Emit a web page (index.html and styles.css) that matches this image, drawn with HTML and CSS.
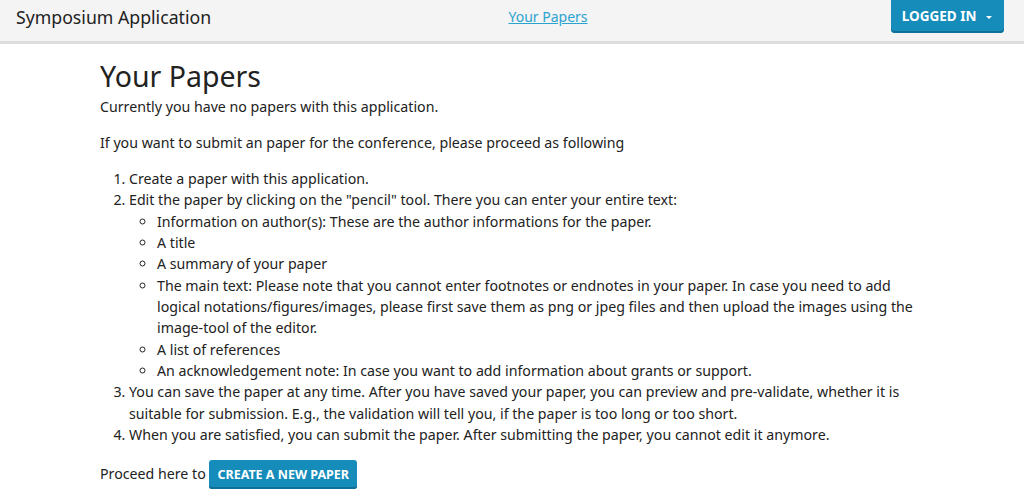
FILE: index.html
```html
<!DOCTYPE html>
<html lang="en">
<head>
  <meta charset="UTF-8" />
  <meta name="viewport" content="width=device-width, initial-scale=1.0"/>
  <title>Your Papers</title>
  <link rel="stylesheet" href="styles.css">
</head>
<body>

  <!-- top bar -->
  <nav class="top-bar">
    <div class="brand">Symposium Application</div>
    <div class="top-links">
      <a href="#">Your Papers</a>
    </div>
    <div class="top-right">
      <a href="#" class="button dropdown">LOGGED IN <span class="caret"></span></a>
    </div>
  </nav>

  <!-- content -->
  <main class="row">
    <h1>Your Papers</h1>
    <p>Currently you have no papers with this application.</p>
    <p>If you want to submit an paper for the conference, please proceed as following</p>
    <ol class="steps">
      <li>Create a paper with this application.</li>
      <li>Edit the paper by clicking on the "pencil" tool. There you can enter your entire text:
        <ul class="parts">
          <li>Information on author(s): These are the author informations for the paper.</li>
          <li>A title</li>
          <li>A summary of your paper</li>
          <li>The main text: Please note that you cannot enter footnotes or endnotes in your paper. In case you need to add logical notations/figures/images, please first save them as png or jpeg files and then upload the images using the image-tool of the editor.</li>
          <li>A list of references</li>
          <li>An acknowledgement note: In case you want to add information about grants or support.</li>
        </ul>
      </li>
      <li>You can save the paper at any time. After you have saved your paper, you can preview and pre-validate, whether it is suitable for submission. E.g., the validation will tell you, if the paper is too long or too short.</li>
      <li>When you are satisfied, you can submit the paper. After submitting the paper, you cannot edit it anymore.</li>
    </ol>
    <p class="proceed">Proceed here to <a href="#" class="button small">CREATE A NEW PAPER</a></p>
  </main>

</body>
</html>
```

FILE: styles.css
```css
* {
  box-sizing: border-box;
}

body {
  font-family: 'Noto Sans', 'Open Sans', sans-serif;
  margin: 0;
  padding: 0;
  background-color: white;
  color: #222222;
  font-size: 14.2px;
  line-height: 21.33px;
}

.top-bar {
  display: flex;
  align-items: flex-start;
  height: 44px;
  background-color: #f4f4f4;
  border-bottom: 3px solid #dddddd;
  padding: 0 20px 0 16px;
}

.brand {
  flex: 1;
  font-size: 17.7px;
  line-height: 34px;
  color: #222222;
}

.top-links {
  flex: 1;
  text-align: center;
  line-height: 33px;
  font-size: 14px;
  padding-left: 76px;
}

.top-links a {
  color: #2ba3cf;
  text-decoration: underline;
}

.top-right {
  flex: 1;
  display: flex;
  justify-content: flex-end;
}

.button {
  display: inline-block;
  background-color: #158cba;
  color: white;
  font-weight: bold;
  text-decoration: none;
  border-radius: 3px;
  box-shadow: inset 0 -2px 0 #0f6f96;
}

.dropdown {
  font-size: 13.5px;
  line-height: 33px;
  padding: 0 12px 0 11px;
  border-radius: 0 0 4px 4px;
}

.caret {
  display: inline-block;
  width: 0;
  height: 0;
  margin-left: 6px;
  vertical-align: middle;
  border-left: 3px solid transparent;
  border-right: 3px solid transparent;
  border-top: 3px solid white;
}

.row {
  max-width: 824px;
  margin: 0 auto;
  padding-top: 15px;
}

h1 {
  font-size: 28.5px;
  font-weight: normal;
  line-height: 1.2;
  margin: 0 0 3px;
  color: #222222;
}

p {
  margin: 0 0 14.6px;
}

.steps {
  margin: 0 0 14.6px;
  padding-left: 29px;
}

.parts {
  list-style-type: circle;
  margin: 0;
  padding-left: 28px;
}

.proceed {
  margin-top: 13px;
}

.small {
  font-size: 12.5px;
  line-height: 29px;
  padding: 0 8px;
}
```
